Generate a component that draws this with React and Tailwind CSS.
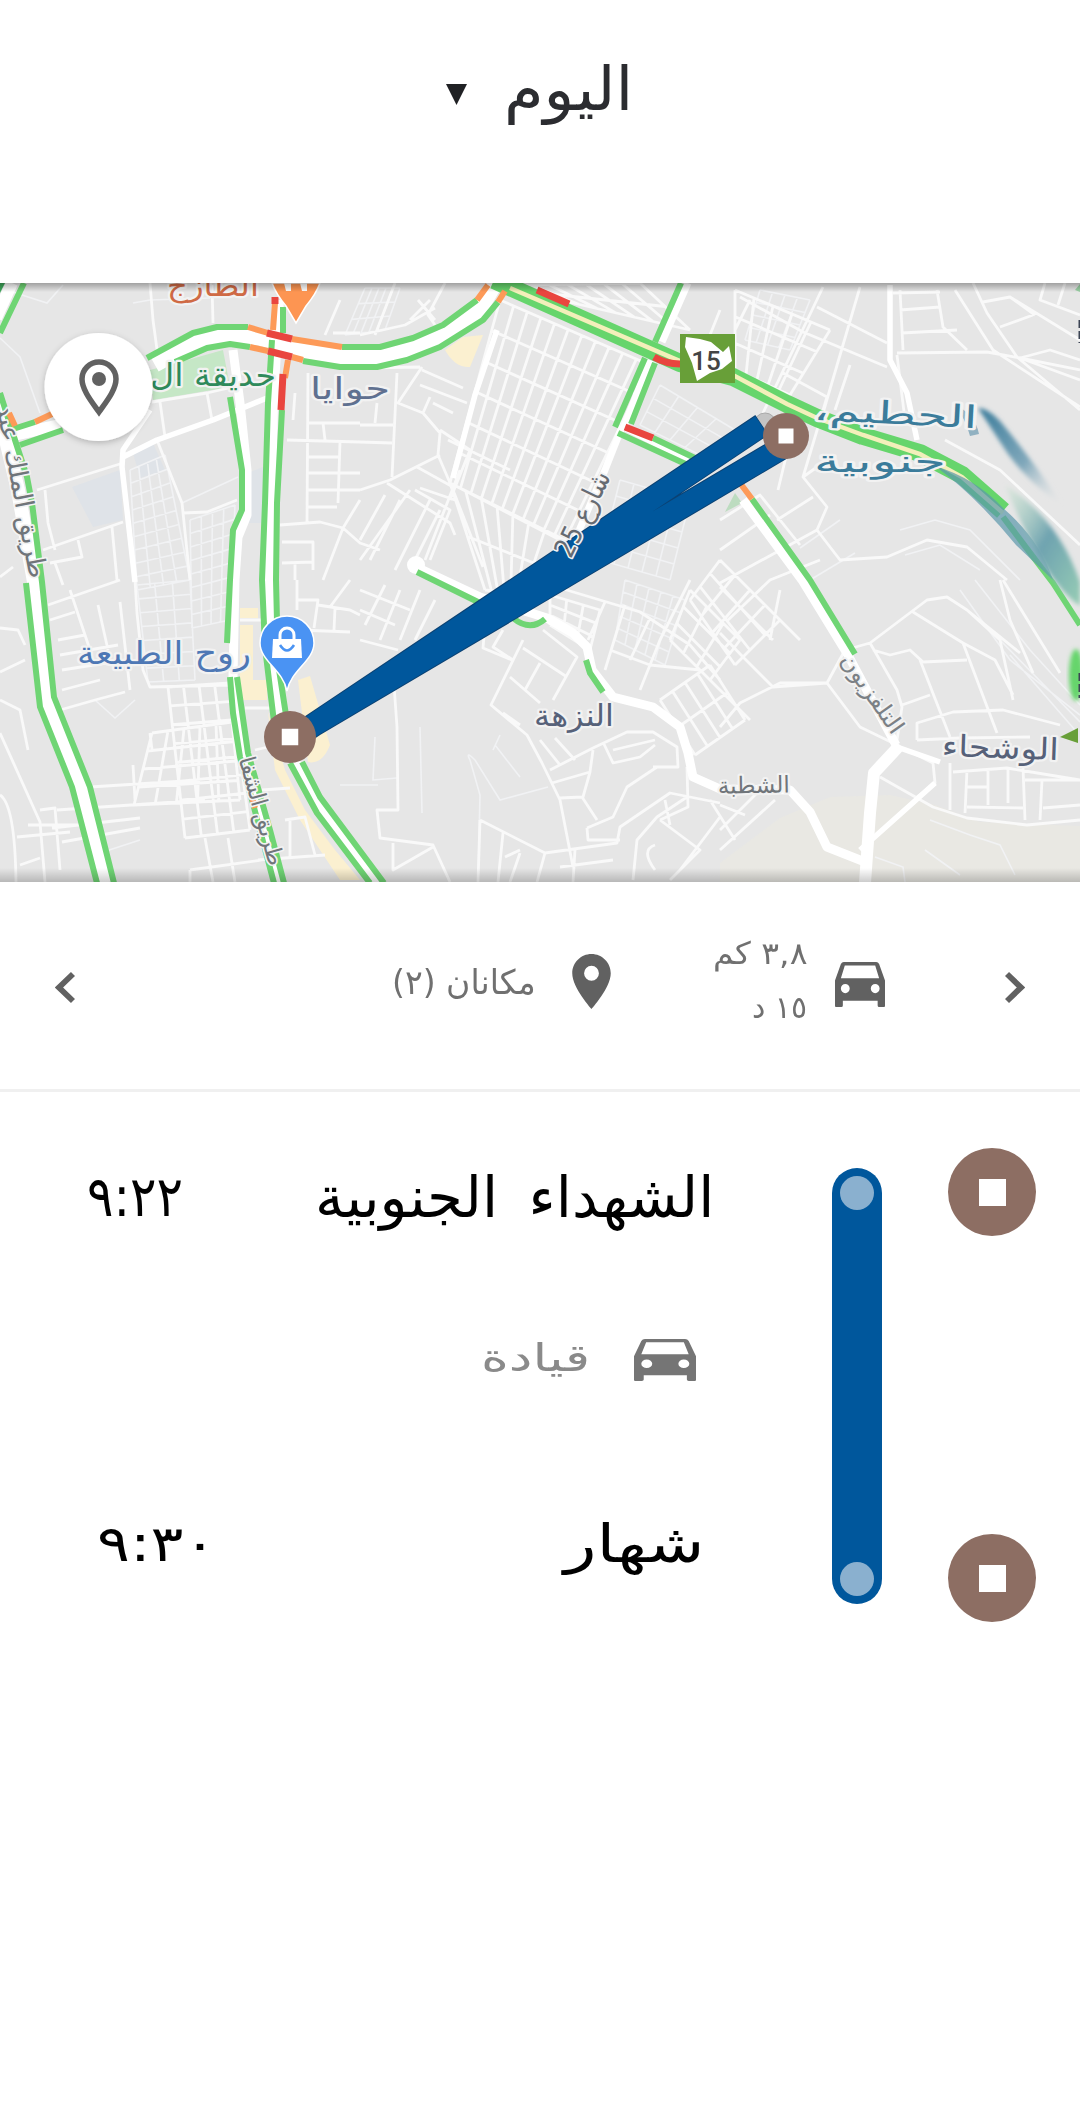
import React, { useLayoutEffect, useRef, useState } from "react";

// Evenly spaced streets running from edge a-b to edge c-d.
function streets(ax, ay, bx, by, cx, cy, dx, dy, n) {
  let d = "";
  for (let i = 0; i <= n; i++) {
    const t = i / n;
    d += `M${ax + (bx - ax) * t} ${ay + (by - ay) * t}L${cx + (dx - cx) * t} ${cy + (dy - cy) * t}`;
  }
  return d;
}

// A block grid inside the quadrilateral a-b-c-d.
function blocks(ax, ay, bx, by, cx, cy, dx, dy, n, m) {
  return streets(ax, ay, bx, by, dx, dy, cx, cy, n) + streets(ax, ay, dx, dy, bx, by, cx, cy, m);
}

// Text squeezed or stretched horizontally to a given width.
function FitText({ width, className, children }) {
  const ref = useRef(null);
  const [scale, setScale] = useState(1);
  useLayoutEffect(() => {
    setScale(width / ref.current.offsetWidth);
  }, [width]);
  return (
    <div className="flex justify-start" style={{ width }}>
      <span
        ref={ref}
        dir="rtl"
        className={`inline-block shrink-0 origin-left whitespace-nowrap font-['DejaVu_Sans',sans-serif] ${className}`}
        style={{ transform: `scaleX(${scale})` }}
      >
        {children}
      </span>
    </div>
  );
}

const THIN = [
  "M0 288L47 303L63 285M0 338L20 357L40 413M182 503L238 477M133 303L150 300L210 298",
  "M375 737L373 780L397 778M420 727L422 813M340 785L378 785M470 760L480 795L478 882M470 760Q465 750 475 760L500 800L548 787",
  "M495 745L520 777M493 750L500 735M810 580L855 553M840 520L800 548M900 530L935 520L970 530L1020 580M905 555L940 545L980 570",
  "M960 590L1010 660L1080 715M975 580L1030 650L1080 705M1000 640L1080 722M1010 655L1075 730",
  "M930 820L970 835L1000 845L1015 875M875 857L903 867L905 882M925 850L960 875M100 853L140 840M95 700L115 718L135 700",
  blocks(130, 470, 165, 455, 190, 580, 137, 590, 4, 9),
  blocks(190, 520, 235, 505, 230, 620, 192, 628, 4, 8),
  blocks(137, 585, 190, 580, 195, 680, 148, 682, 3, 7),
  blocks(365, 288, 400, 288, 385, 330, 345, 335, 5, 3),
  blocks(660, 385, 735, 430, 700, 455, 640, 425, 4, 3),
  blocks(625, 580, 685, 600, 665, 665, 615, 640, 5, 5),
  blocks(760, 290, 810, 300, 790, 350, 745, 340, 4, 4),
  blocks(620, 480, 690, 500, 670, 580, 600, 560, 5, 5),
];

const MINOR = [
  "M150 283L153 320L158 357M212 285L213 323M152 402L207 393L233 387M160 402L165 437M207 393L212 420",
  "M37 490L123 463M45 490L48 523L55 550M43 550L123 522M157 440L182 503L190 580M183 513L207 512L237 500M112 527L117 580",
  "M78 540L82 557L50 563M0 577L13 567M55 563L63 585M287 440L360 442M308 373L307 523M323 423L325 440M340 442L338 503",
  "M307 423L360 423M307 457L340 457M307 473L360 473M307 490L360 490M307 507L337 507M280 525L320 522L343 528L360 543L380 550",
  "M360 500L343 528L323 580M282 542L313 542L313 570M282 563L313 562M295 563V580M295 393L293 420M333 333H360M340 300L325 335",
  "M135 580L137 613L143 670L150 687L230 685M48 605L120 580M50 620L75 612M70 590L90 650M98 605L108 650M120 602L130 690",
  "M58 640L85 635M60 655L118 645M62 670L125 660M62 690L100 680M0 672L25 660M0 700L20 710L28 750M0 733L40 822L45 882M28 825H80M0 795Q15 805 16 882",
  "M17 837L70 832M20 865L40 858M60 710L95 700L125 692M0 628L18 630L25 645M40 810L55 808L60 870M62 842L140 828",
  "M90 787L200 780M57 810L205 800M52 828L140 818M133 765L135 800M150 733L152 750M255 750L290 742M262 790L290 788",
  blocks(168, 687, 230, 683, 250, 830, 185, 838, 4, 8),
  blocks(152, 733, 232, 722, 240, 800, 134, 805, 5, 4),
  "M205 838L213 882M228 838L235 882M190 870L262 860M285 820L305 817L315 855M258 860L325 855M290 820L290 858M190 870V882",
  "M240 620H265M245 708H270M297 580V610M297 600H318L314 628M318 605L350 610L360 615M335 608L334 630M300 630L350 632M350 580L330 607",
  "M397 373L392 477M360 425H393M360 442L392 443M377 403L375 423M360 490L390 480L440 455M422 367L398 403L423 413L440 433L438 455L453 490L483 567",
  "M360 368L420 367M420 385L467 403M422 370L463 388M430 397L423 413M433 403L453 413M387 483L450 523L455 535M417 467L453 487M410 490L360 560M420 488L455 500M430 500L395 570M440 510L410 570M415 490L450 510L430 560",
  "M400 500L370 560M385 495L360 540M395 283L375 335M418 300L435 320M360 335L405 325L435 308M445 283L428 315L435 325M410 320L430 300",
  "M460 470L425 560M440 430L470 450L450 500M448 440L510 470",
  blocks(500, 300, 650, 365, 565, 540, 450, 483, 11, 6),
  blocks(450, 483, 560, 540, 530, 595, 485, 590, 7, 2),
  blocks(512, 285, 640, 283, 690, 330, 560, 300, 7, 2),
  blocks(550, 595, 600, 610, 590, 650, 550, 625, 3, 3),
  blocks(735, 290, 830, 330, 790, 395, 735, 370, 5, 3),
  blocks(720, 560, 780, 620, 735, 665, 690, 600, 4, 3),
  "M394 685L397 727L398 810L377 810L380 838L433 845L450 882M393 843L393 870L433 847",
  "M523 640L491 705L527 735L542 763L560 800L573 867M550 770L593 748L627 732L653 732L677 747L678 767L653 767M552 783L590 772M560 798L582 797L597 820M593 750L590 772L583 797",
  "M480 820L545 853L537 882M480 820L478 882M503 833L498 882M545 853L617 843L620 827L670 793L720 803M633 880L637 840L657 817L687 797",
  "M587 828L613 817L627 787L657 767M587 828L588 840H620M687 767L688 807L660 820M720 817L680 870M560 867L613 860M575 850L573 882M505 857L520 850M520 853L510 882",
  "M510 677L540 703M523 648L567 677M543 630L577 657L553 700M503 630L493 647L513 660M503 713L520 725M540 663L525 690M485 625L483 648L512 660M540 740L560 765M555 738L575 760",
  "M603 742L613 763L640 757L655 745M613 750L655 740M660 820L700 850L670 880M665 800L670 825M710 800L735 840M655 870Q640 850 655 845",
  "M360 590L410 610M360 610L395 625M385 585L365 625M400 590L380 640M420 590L400 640M435 600L415 640M360 640L398 650",
  "M560 588L640 612L690 645L720 680M690 580L660 640L640 690M610 650L650 665L700 670L750 720M625 605L605 670M605 602L588 640M650 618L630 660",
  blocks(690, 590, 740, 640, 710, 680, 670, 640, 3, 3),
  blocks(660, 700, 710, 665, 745, 720, 695, 755, 4, 2),
  "M720 587L773 640M720 727L740 703L780 683L827 683L860 727L893 743M827 683L773 687L743 657L720 633M827 683L845 650L870 643L927 600L947 597L967 610L1020 653",
  "M870 643L897 690L902 707L897 740M913 612L963 643L997 733M920 660L950 737M923 662L967 660M902 705L930 695M917 740L917 723L953 712L1003 710L1060 725M917 740L960 738L1030 737",
  "M873 650L890 655L910 650L923 662M967 610L1000 640L1013 700M963 643L995 660L1013 695M1000 580L1010 620L1033 673M1003 580L1060 673",
  "M907 750L933 763L935 783L917 797M953 772L1007 768L1080 780M950 763V810M967 770L965 813M988 770L988 805M1008 767V803M1023 767L1025 820M1042 780L1040 820M967 807L1023 808M1025 780H1080M1043 808L1080 805M965 787H988",
  "M880 777L933 807L967 818L1027 825L1080 820M720 850L775 800M720 830L760 790M720 805L745 815",
  "M740 297L803 332L887 367M817 307L887 343M823 287L763 413M860 287L823 413M893 293L940 292M900 310L940 307M902 333L957 330M897 353L987 352L1020 358L1080 370M937 290L943 327L967 350M955 290L993 350L1080 407",
  "M973 283L987 313L1017 357L1080 410M983 302L1010 297L1080 340M1000 327L1033 315M1010 297L1035 315M1045 283L1040 300L1080 315M1065 283L1058 305M783 373L827 397L803 477L827 507L817 530L840 560L887 557L927 540L967 547L1007 580",
  "M817 530L720 583M813 497L777 520M803 477L827 460M790 440L778 490M720 520L760 495L800 545M720 550L770 515M750 510L800 570M897 355L905 420M850 365L835 410M900 290L903 350M1020 358L1080 380M1020 358L1050 350L1080 360",
  "M945 440L1000 470L1080 545M720 310L700 360M750 300L735 330",
  "M728 620L770 580L820 560M760 600L800 640M780 590L770 640",
];

const ROADS = [
  "M150 410L123 450L122 467L130 537L135 582",
  "M123 457L157 440L213 420L267 398",
  "M497 330L475 395L453 478",
  "M890 285L890 360L907 393L917 440",
  "M860 850L935 783",
  "M897 747L940 762",
];

const GREEN = [
  "M0 393L15 440L27 477L32 503L42 582L54 697L90 787L114 883",
  "M26 583L40 707L72 787L97 883",
  "M0 333L24 283",
  "M10 430L35 422M20 445L63 430",
  "M147 358L193 333L217 327L248 327M342 347L380 347L413 338L443 325L477 300",
  "M175 362L207 348L230 344L250 347M303 361L340 367L377 367L407 360L440 347L483 320L498 302",
  "M272 340L268 403L265 503L262 580L265 647L274 722M290 763L317 813L370 883",
  "M283 307L283 333M282 410L277 503L276 580L278 663L286 715M302 762L320 797L384 883",
  "M230 397L242 470L242 510L233 530L230 580L227 643M230 677L233 713L240 757L252 800L274 883",
  "M237 677L248 753L270 830L284 883",
  "M681 283L655 342M645 358L615 427M655 363L631 424M653 438L697 459M618 433L690 466",
  "M752 499L810 580L855 654",
  "M417 572L480 603L513 618Q530 632 545 619M586 660L590 673L603 692",
  "M1003 517L1053 583L1080 625",
];

const WHITE_BANDS = [
  ["M-8 393L6 440L18 490L34 582L47 702L81 787L105 883", 14],
  ["M0 438L60 425", 12],
  ["M-4 318L12 283", 12],
  ["M155 365L200 340L230 335L260 338L300 350L340 357L378 357L410 349L440 336L480 310L495 284", 15],
  ["M279 300L273 403L271 503L269 580L271 647L281 722L296 763L318 805L377 883", 10],
  ["M233 350L240 403L247 470L247 515L238 537L235 580L233 677L242 757L262 830L278 883", 9],
  ["M688 283L662 342M650 360L624 427L692 461M622 427L605 470L575 540L530 600", 7],
  ["M743 500L802 580L848 655L896 745", 9],
  ["M412 565L480 597L547 618L573 633L587 647L592 670L613 697L653 707L680 727L688 753L693 777L720 789L790 790L810 812L827 847L865 862", 9],
  ["M900 745L874 773L870 813L865 883", 12],
];

const TRAFFIC_ORANGE = "M35 422L52 414M9 413L15 426M248 327L268 333M292 339L342 347M250 347L268 351M292 357L303 360M275 303L273 330M288 360L285 378M477 300L488 285M498 302L505 291M740 483L752 499M252 797L255 808";
const TRAFFIC_RED = "M267 333L292 339M268 351L292 357M283 374L281 410M275 297L275 304M537 290L569 304M654 357Q666 364 680 364M625 427L653 438";

function MapLabel({ x, y, width, size = 28, rotate = 0, color, children, halo = 4, bold = 0.5 }) {
  const shared = {
    textAnchor: "middle",
    textLength: width,
    lengthAdjust: "spacingAndGlyphs",
    fontSize: size,
    direction: "rtl",
    strokeLinejoin: "round",
    paintOrder: "stroke",
  };
  return (
    <g transform={`translate(${x} ${y}) rotate(${rotate})`} className="font-['DejaVu_Sans',sans-serif]">
      <text {...shared} fill={color} stroke="#f2f2f2" strokeWidth={halo + bold}>
        {children}
      </text>
    </g>
  );
}

function StopMarker({ x, y, r, side }) {
  return (
    <g>
      <circle cx={x} cy={y} r={r} fill="#8d6e63" />
      <rect x={x - side / 2} y={y - side / 2} width={side} height={side} fill="#fff" />
    </g>
  );
}

function CityMap() {
  return (
    <svg viewBox="0 283 1080 599" className="block h-full w-full" fill="none">
      <defs>
        <linearGradient id="streak" x1="0" y1="0" x2="1" y2="1">
          <stop offset="0" stopColor="#3b7c9b" />
          <stop offset="0.55" stopColor="#7fa7ba" />
          <stop offset="1" stopColor="#e6e6e6" stopOpacity="0" />
        </linearGradient>
        <linearGradient id="smear" x1="0" y1="0" x2="1" y2="1">
          <stop offset="0" stopColor="#b5dfc0" stopOpacity="0.2" />
          <stop offset="0.5" stopColor="#6fa3b0" />
          <stop offset="1" stopColor="#97cdb5" />
        </linearGradient>
        <linearGradient id="topShade" x1="0" y1="0" x2="0" y2="1">
          <stop offset="0" stopColor="#000" stopOpacity="0.3" />
          <stop offset="1" stopColor="#000" stopOpacity="0" />
        </linearGradient>
        <linearGradient id="bottomShade" x1="0" y1="0" x2="0" y2="1">
          <stop offset="0" stopColor="#000" stopOpacity="0" />
          <stop offset="1" stopColor="#000" stopOpacity="0.2" />
        </linearGradient>
        <filter id="soft" x="-20%" y="-20%" width="140%" height="140%">
          <feGaussianBlur stdDeviation="2" />
        </filter>
        <filter id="lift" x="-30%" y="-30%" width="160%" height="160%">
          <feDropShadow dx="0" dy="2" stdDeviation="3" floodOpacity="0.22" />
        </filter>
      </defs>

      <rect y="283" width="1080" height="599" fill="#e6e6e6" />
      <path d="M720 863L780 818L830 797L890 795L935 805L980 822L1080 826V882H720Z" fill="#e9e8e3" />
      <path d="M72 487L120 470L123 520L93 527ZM248 473L263 467L262 523L247 523ZM133 453L153 443L165 470L140 478Z" fill="#dfe3e8" />
      <path d="M150 370L177 363L223 350L230 387L153 400Z" fill="#c5e7c6" />
      <path d="M445 350L463 337L483 335L470 367Q455 368 445 350ZM240 608H258V618H240ZM240 625H253V680H267V700H240ZM298 680L310 676L330 745Q322 765 308 762ZM268 712L285 770L305 810L335 850L360 880H340L300 820L275 770Z" fill="#fbf0d0" />
      <path d="M725 512L735 493L742 503Z" fill="#bddcc0" />

      <path d={THIN.join("")} stroke="#f1f2f4" strokeWidth="1.6" />
      <path d={MINOR.join("")} stroke="#f9f9f9" strokeWidth="2.8" strokeLinejoin="round" />
      <path d={ROADS.join("")} stroke="#fff" strokeWidth="5.5" strokeLinejoin="round" />
      {WHITE_BANDS.map(([d, w]) => (
        <path key={d} d={d} stroke="#fff" strokeWidth={w} strokeLinejoin="round" />
      ))}
      <circle cx="416" cy="565" r="9" fill="#fff" />
      <path d={GREEN.join("")} stroke="#6fd574" strokeWidth="6" strokeLinejoin="round" />
      <path d="M0 283H5L0 293Z" fill="#3faa5c" />

      <path
        d="M494 280L680 363L733 377L787 404L817 418L863 436L920 453L962 475L1003 511"
        stroke="#66d56c"
        strokeWidth="18"
        strokeLinejoin="round"
      />
      <path d="M510 288L680 361L733 375L787 404L817 418L863 435L920 454L962 477L1003 513" stroke="#f3efba" strokeWidth="4.5" />
      <path d={TRAFFIC_ORANGE} stroke="#fd9a58" strokeWidth="6" />
      <path d={TRAFFIC_RED} stroke="#e9453f" strokeWidth="7" />

      {/* route 15 shield */}
      <rect x="680" y="334" width="55" height="49" fill="#689f38" />
      <path d="M686 337L700 339L711 342L723 352L729 346L732 361L722 369L710 373L697 381L692 363L685 347Z" fill="#fff" />
      <text x="706" y="370" fontSize="26" fontWeight="500" fill="#444" textAnchor="middle" className="font-['Roboto',sans-serif]">15</text>

      <MapLabel x={213} y={296} width={92} size={30} color="#cf6a45">الطازج</MapLabel>
      <MapLabel x={213} y={386} width={126} size={31} color="#2f8a5b">حديقة ال</MapLabel>
      <MapLabel x={350} y={399} width={80} size={30} color="#5f7090">حوايا</MapLabel>
      <MapLabel x={164} y={664} width={174} size={32} color="#4e78b5">روح الطبيعة</MapLabel>
      <MapLabel x={574} y={726} width={80} size={30} color="#566179">النزهة</MapLabel>
      <MapLabel x={754} y={793} width={72} size={23} rotate={-1} color="#70757a">الشطبة</MapLabel>
      <MapLabel x={1000} y={758} width={117} size={30} rotate={2} color="#566179">الوشحاء</MapLabel>
      <MapLabel x={866} y={698} width={92} size={23} rotate={55} color="#7b8085" halo={3}>التلفزيون</MapLabel>
      <MapLabel x={254} y={813} width={112} size={23} rotate={74} color="#70757a" halo={3}>طريق الشفا</MapLabel>
      <MapLabel x={13} y={493} width={176} size={26} rotate={79} color="#70757a" halo={3}>طريق الملك عبد</MapLabel>

      {/* warped district label at the eastern edge */}
      <path d="M935 466Q975 478 1003 508Q1040 540 1053 580L1016 545Q975 495 935 466Z" fill="#5b97ab" opacity="0.7" />
      <path d="M1005 485Q1058 518 1080 582V606Q1044 582 1005 485Z" fill="url(#smear)" filter="url(#soft)" />
      <path d="M978 408Q988 408 1000 421Q1034 462 1063 506Q1030 484 1008 454Z" fill="url(#streak)" filter="url(#soft)" />
      <path d="M955 405Q975 414 979 434L970 436Q966 420 955 405Z" fill="#3b7c9b" opacity="0.5" />
      <MapLabel x={895} y={424} width={164} size={31} rotate={3} color="#3b7c9b">الحطيم،</MapLabel>
      <MapLabel x={880} y={472} width={132} size={31} color="#3b7c9b">جنوبية</MapLabel>
      <ellipse cx="1076" cy="675" rx="7" ry="26" fill="#66d56c" filter="url(#soft)" />
      <path d="M1060 737L1078 728V743Z" fill="#689f38" />
      <path d="M1079.500 320V343M1079.500 673V698" stroke="#3c4454" strokeWidth="2" strokeDasharray="8 3" />
      <path d="M1075 290L1080 284V292Z" fill="#9ad0a4" />

      {/* travelled route */}
      <circle cx="765" cy="424" r="11" fill="#c4c4c4" stroke="#aaa" />
      <path d="M300 734L762 425M300 733L785 446" stroke="#0b4273" strokeWidth="24" />
      <path d="M300 734L761.500 425.500M300 733L785 446" stroke="#00579c" strokeWidth="22" />
      <MapLabel x={591} y={518} width={92} size={28} rotate={-64} color="#666b72" halo={3}>شارع 25</MapLabel>

      {/* place pins */}
      <path d="M272 283H320Q316 294 306 306L296 323L286 306Q276 294 272 283Z" fill="#fd9552" stroke="#fff" strokeWidth="1.5" />
      <path d="M284 283H291V291H286ZM300 283H307V291H302Z" fill="#fff" />
      <path d="M287 616C272 616 260 628 260 643C260 661 283 670 287 691C291 670 314 661 314 643C314 628 302 616 287 616Z" fill="#4a93f3" stroke="#fff" strokeWidth="1.5" />
      <path d="M273 639H301L302 658H272Z" fill="#fff" />
      <path d="M280 640V635a7 7 0 0 1 14 0V640" stroke="#fff" strokeWidth="3" />
      <path d="M280 645Q287 656 294 645" stroke="#4a93f3" strokeWidth="2.6" />

      <StopMarker x={290} y={737} r={26} side={16.5} />
      <StopMarker x={786} y={436} r={23} side={15} />

      <rect y="283" width="1080" height="9" fill="url(#topShade)" />
      <rect y="868" width="1080" height="14" fill="url(#bottomShade)" />

      {/* timeline button */}
      <circle cx="98.500" cy="387" r="54" fill="#fff" filter="url(#lift)" />
      <path d="M99 412C92 402 82 390 82 379A17 17 0 0 1 116 379C116 390 106 402 99 412Z" stroke="#616161" strokeWidth="5.500" />
      <circle cx="99" cy="379" r="7" fill="#616161" />
    </svg>
  );
}

function Car({ className }) {
  return (
    <svg viewBox="0 0 51 44" preserveAspectRatio="none" className={className}>
      <path
        fill="currentColor"
        fillRule="evenodd"
        d="M9 0H42Q44 0 45 2L51 18V43Q51 44 50 44H45Q43.500 44 43.500 42.500V38H8V42.500Q8 44 6.500 44H1Q0 44 0 43V18L6 2Q7 0 9 0ZM10 3.500L6 16H45L41 3.500ZM10.500 21.500A4.500 4.500 0 1 0 10.500 30.500A4.500 4.500 0 1 0 10.500 21.500ZM41 21.500A4.500 4.500 0 1 0 41 30.500A4.500 4.500 0 1 0 41 21.500Z"
      />
    </svg>
  );
}

function Chevron({ className, d }) {
  return (
    <svg viewBox="0 0 20 33" fill="none" className={`h-[33px] w-5 shrink-0 text-[#616161] ${className}`}>
      <path d={d} stroke="currentColor" strokeWidth="5.8" />
    </svg>
  );
}

function StopDot() {
  return (
    <div className="flex size-[88px] items-center justify-center rounded-full bg-[#8d6e63]">
      <div className="size-[27px] bg-white" />
    </div>
  );
}

export default function App() {
  return (
    <div className="flex min-h-[2118px] w-[1080px] flex-col overflow-hidden bg-white">
      <header className="flex h-[283px] items-start gap-[57px] pl-[446px] pt-[46px]">
        <svg viewBox="0 0 21 21" className="mt-[38px] size-[21px] text-[#202124]">
          <path d="M0 0H21L10.500 21Z" fill="currentColor" />
        </svg>
        <div className="ml-[-20px]">
          <FitText width={129} className="text-[61px] leading-[86px] text-[#2b2c30]">اليوم</FitText>
        </div>
      </header>

      <main className="h-[599px] overflow-hidden">
        <CityMap />
      </main>

      <section className="flex h-[210px] items-center border-b-[3px] border-[#f0f0f0] pl-[55px]">
        <Chevron className="mt-1" d="M18 3L4 16.500L18 30" />
        <div className="ml-[317px] pb-2">
          <FitText width={144} className="text-[34px] leading-[44px] text-[#707070]">مكانان (٢)</FitText>
        </div>
        <svg viewBox="5 2 14 20" className="ml-[36px] mt-[-9px] h-[55px] w-[39px] shrink-0 text-[#616161]">
          <path fill="currentColor" d="M12 2C8.130 2 5 5.130 5 9c0 5.250 7 13 7 13s7-7.750 7-13c0-3.870-3.130-7-7-7zm0 9.700a2.700 2.700 0 1 1 0-5.400 2.700 2.700 0 0 1 0 5.400z" />
        </svg>
        <div className="ml-[102px] flex w-[94px] flex-col items-end pb-3">
          <FitText width={94} className="text-[31px] leading-[54px] text-[#707070]">٣,٨ كم</FitText>
          <FitText width={55} className="text-[31px] leading-[54px] text-[#707070]">١٥ د</FitText>
        </div>
        <Car className="ml-[28px] mt-[-3px] h-[45px] w-[50px] shrink-0 text-[#616161]" />
        <Chevron className="ml-[120px] mt-1" d="M2 3L16 16.500L2 30" />
      </section>

      <section className="flex items-start pt-[56px]">
        <div className="flex w-[714px] flex-col">
          <div className="flex h-[90px] items-center justify-between pl-[87px] pt-2">
            <FitText width={96} className="text-[56px] leading-[80px] text-black">٩:٢٢</FitText>
            <FitText width={399} className="text-[57px] leading-[80px] text-black [word-spacing:12px]">الشهداء الجنوبية</FitText>
          </div>
          <div className="mt-[77px] flex h-[90px] items-center justify-end gap-[44px] pr-[18px]">
            <FitText width={109} className="pb-1 text-[38px] leading-[60px] text-[#8a8a8a]">قيادة</FitText>
            <Car className="h-[42px] w-[62px] shrink-0 text-[#757575]" />
          </div>
          <div className="mt-[92px] flex h-[90px] items-center justify-between pl-[97px] pr-[9px] pt-1">
            <FitText width={119} className="text-[50px] leading-[80px] text-black">٩:٣٠</FitText>
            <FitText width={141} className="text-[53px] leading-[80px] text-black">شهار</FitText>
          </div>
        </div>
        <div className="ml-[118px] mt-[20px] flex h-[436px] w-[50px] flex-col items-center justify-between rounded-full bg-[#00579c] py-2">
          <div className="size-[34px] rounded-full bg-[#8ab0cf]" />
          <div className="size-[34px] rounded-full bg-[#8ab0cf]" />
        </div>
        <div className="ml-[66px] flex flex-col gap-[298px]">
          <StopDot />
          <StopDot />
        </div>
      </section>
    </div>
  );
}
